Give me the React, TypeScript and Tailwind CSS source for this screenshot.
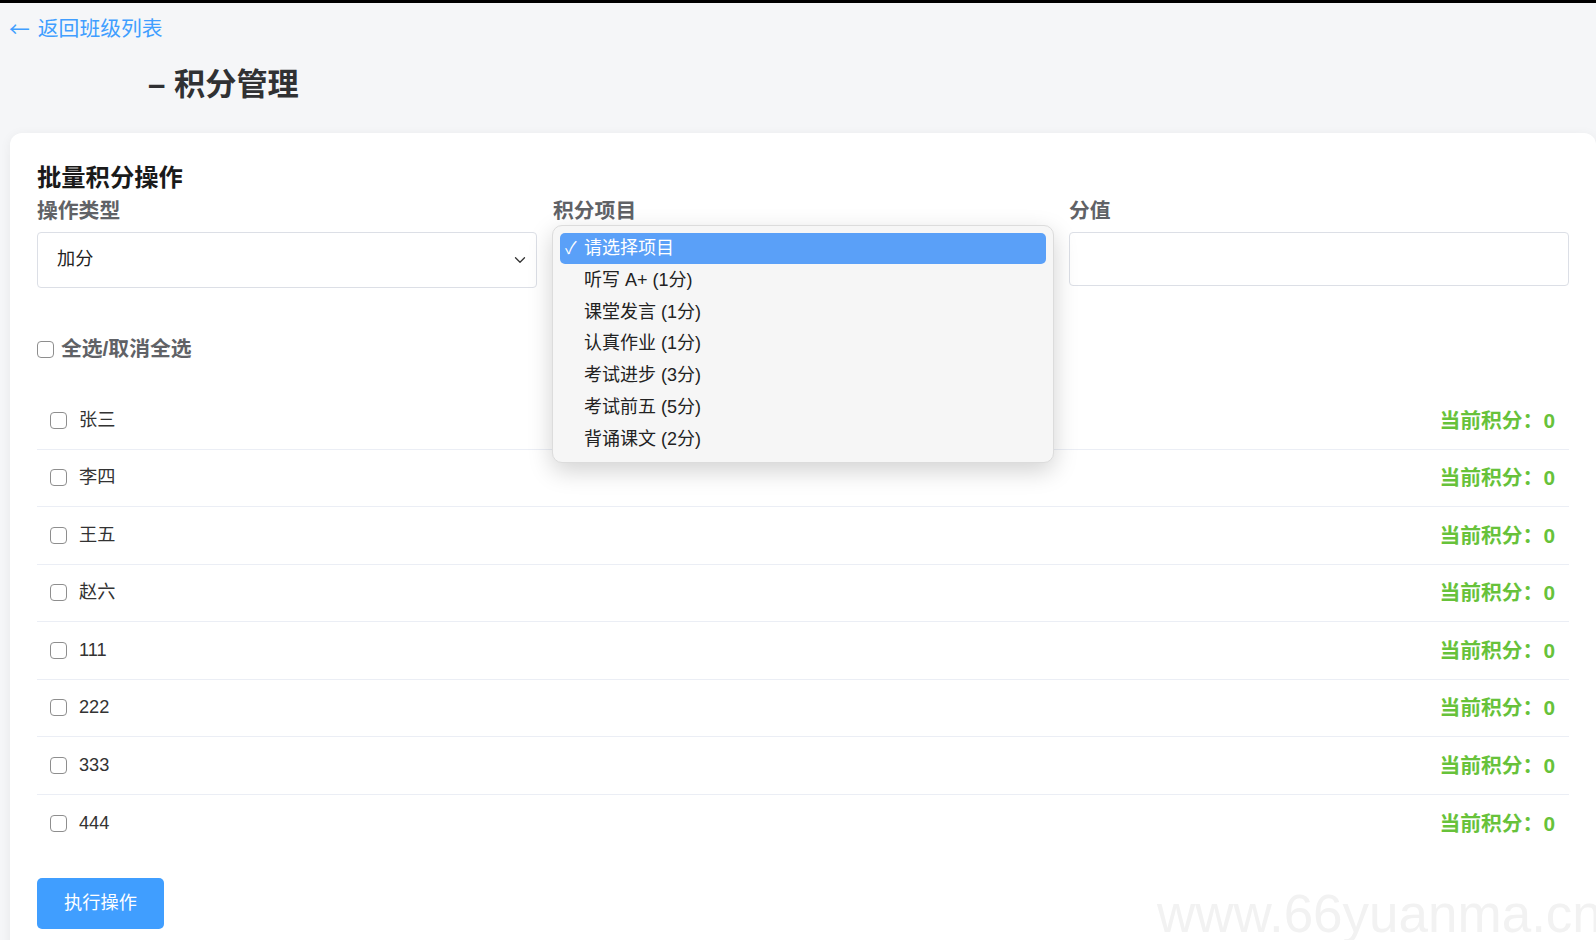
import { useState } from "react";

const students = ["张三", "李四", "王五", "赵六", "111", "222", "333", "444"];

const pointItems = [
  "听写 A+ (1分)",
  "课堂发言 (1分)",
  "认真作业 (1分)",
  "考试进步 (3分)",
  "考试前五 (5分)",
  "背诵课文 (2分)",
];

function Checkbox() {
  return (
    <input
      type="checkbox"
      className="h-[17px] w-[17px] shrink-0 appearance-none rounded-[4px] border border-[#8e8e8e] bg-white"
    />
  );
}

function Chevron() {
  return (
    <svg width="12" height="8" viewBox="0 0 12 8" fill="none" className="shrink-0">
      <path d="M1.5 1.8 6 6.2l4.5-4.4" stroke="#333" strokeWidth="1.3" strokeLinecap="round" strokeLinejoin="round" />
    </svg>
  );
}

// open item picker, drawn over the closed select
function ItemMenu() {
  return (
    <div className="absolute left-[-1px] top-[-7px] z-10 w-[502px] rounded-[10px] border border-[#dcdcdc] bg-[#f6f6f6] px-[7px] pb-[7px] pt-[7px] shadow-[0_8px_24px_rgba(0,0,0,0.18)]">
      <div className="flex h-[31px] items-center rounded-[5px] bg-[#5aa0f8] text-[18px] text-white">
        <span className="w-[24px] shrink-0 pl-[5px] text-[17px] leading-none">✓</span>
        <span>请选择项目</span>
      </div>
      {pointItems.map((item) => (
        <div key={item} className="flex h-[31.8px] items-center pl-[24px] pt-[1px] text-[18px] text-[#222]">
          {item}
        </div>
      ))}
    </div>
  );
}

export default function App() {
  const [type] = useState("加分");

  return (
    <div className="relative h-[940px] overflow-hidden border-t-[3px] border-black bg-[#f5f6f8] font-['Liberation_Sans','Noto_Sans_CJK_SC',sans-serif]">
      <a href="#" className="ml-[9px] mt-[10px] flex items-center gap-[8px] text-[20.8px] leading-[31px] text-[#409eff]">
        <span className="font-['Noto_Sans_CJK_SC',sans-serif]">←</span>
        返回班级列表
      </a>
      <h2 className="mt-[21px] pl-[148px] text-[31.2px] font-bold leading-[40px] text-[#303133]">
        – 积分管理
      </h2>

      <section className="ml-[10px] mt-[28px] rounded-[12px] bg-white px-[27px] pb-[60px] pt-[30px] shadow-[0_2px_12px_rgba(0,0,0,0.06)]">
        <h3 className="text-[24.3px] font-bold leading-[30px] text-[#1a1a1a]">批量积分操作</h3>

        <div className="mt-[5px] grid grid-cols-3 gap-[16px]">
          <div>
            <label className="block text-[20.8px] font-bold leading-[26px] text-[#606266]">操作类型</label>
            <div className="mt-[8px] flex h-[56px] items-center justify-between rounded-[4px] border border-[#dcdfe6] pl-[19px] pr-[10px] text-[18.2px] text-[#222]">
              {type}
              <Chevron />
            </div>
          </div>
          <div>
            <label className="block text-[20.8px] font-bold leading-[26px] text-[#606266]">积分项目</label>
            <div className="relative mt-[8px]">
              <div className="flex h-[56px] items-center justify-end rounded-[4px] border border-[#dcdfe6] pr-[10px]">
                <Chevron />
              </div>
              <ItemMenu />
            </div>
          </div>
          <div>
            <label className="block text-[20.8px] font-bold leading-[26px] text-[#606266]">分值</label>
            <input
              type="number"
              className="mt-[8px] block h-[54px] w-full rounded-[4px] border border-[#dcdfe6] px-[19px] text-[18.2px] outline-none"
            />
          </div>
        </div>

        <label className="mt-[46px] flex items-center gap-[7px] text-[20.8px] font-bold leading-[30px] text-[#606266]">
          <Checkbox />
          全选/取消全选
        </label>

        <ul className="mt-[28px]">
          {students.map((name) => (
            <li
              key={name}
              className="flex h-[57.5px] items-center justify-between border-b border-[#ebeef5] pl-[13px] pr-[14px] last:border-b-0"
            >
              <label className="flex items-center gap-[12px] text-[18.2px] text-[#333]">
                <Checkbox />
                {name}
              </label>
              <span className="text-[20.8px] font-bold text-[#67c23a]">当前积分：0</span>
            </li>
          ))}
        </ul>

        <button className="mt-[26px] h-[51px] w-[127px] rounded-[5px] bg-[#409eff] text-[18.2px] text-white">
          执行操作
        </button>
      </section>

      <div className="pointer-events-none absolute left-[1157px] top-[884px] whitespace-nowrap font-['Liberation_Sans',sans-serif] text-[53px] leading-none text-[#f2f2f2]">
        www.66yuanma.cn
      </div>
    </div>
  );
}
